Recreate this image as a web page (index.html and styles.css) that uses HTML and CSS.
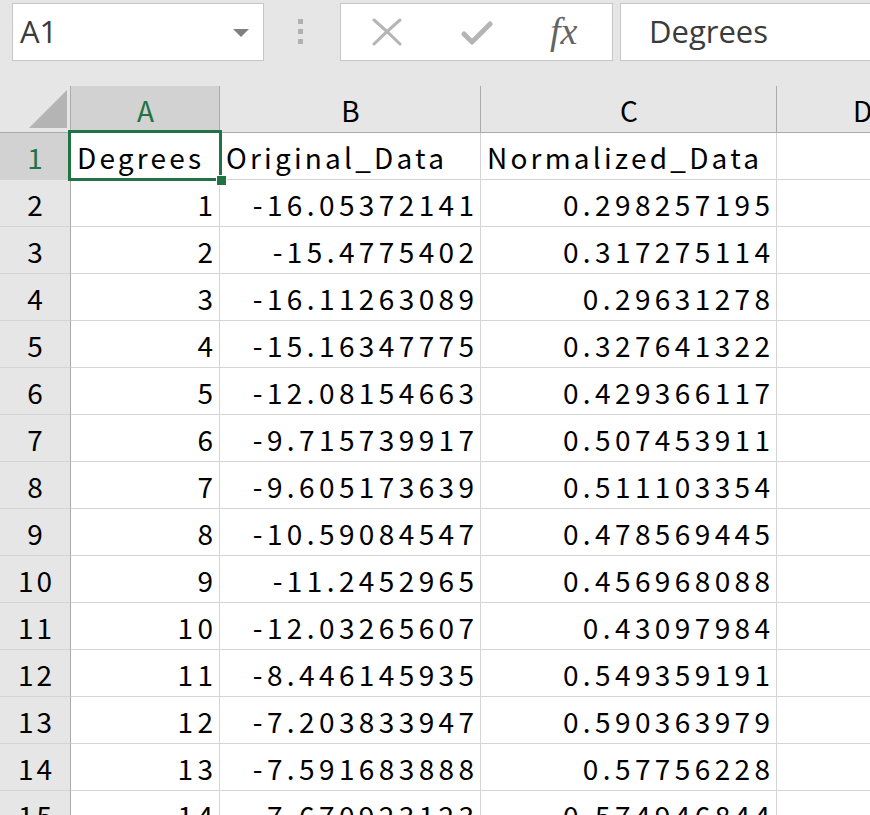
FILE: index.html
```html
<!DOCTYPE html>
<html>
<head>
<meta charset="utf-8">
<link rel="stylesheet" href="styles.css">
</head>
<body>
<div class="topbar">
  <div class="namebox"><span class="nb-text">A1</span><span class="nb-arrow"></span></div>
  <div class="grip"><i></i><i></i><i></i></div>
  <div class="fbtns">
    <svg class="ic-x" width="30" height="28" viewBox="0 0 30 28"><path d="M2 2 Q15 13 28 26 M28 2 Q14 14 2 26" stroke="#b5b5b5" stroke-width="3" stroke-linecap="round" fill="none"/></svg>
    <svg class="ic-check" width="32" height="26" viewBox="0 0 32 26"><path d="M3 14 L11 22 L29 4" stroke="#b5b5b5" stroke-width="5" stroke-linecap="round" stroke-linejoin="round" fill="none"/></svg>
    <span class="fx">fx</span>
  </div>
  <div class="finput">Degrees</div>
</div>
<div class="sheet">
  <div class="grid">
    <div class="corner"><span class="tri"></span></div>
    <div class="ch sel">A</div>
    <div class="ch">B</div>
    <div class="ch">C</div>
    <div class="ch last">D</div>

    <div class="rh sel">1</div>
    <div class="c t">Degrees</div>
    <div class="c t">Original_Data</div>
    <div class="c t">Normalized_Data</div>
    <div class="c e"></div>

    <div class="rh">2</div><div class="c">1</div><div class="c">-16.05372141</div><div class="c">0.298257195</div><div class="c e"></div>
    <div class="rh">3</div><div class="c">2</div><div class="c">-15.4775402</div><div class="c">0.317275114</div><div class="c e"></div>
    <div class="rh">4</div><div class="c">3</div><div class="c">-16.11263089</div><div class="c">0.29631278</div><div class="c e"></div>
    <div class="rh">5</div><div class="c">4</div><div class="c">-15.16347775</div><div class="c">0.327641322</div><div class="c e"></div>
    <div class="rh">6</div><div class="c">5</div><div class="c">-12.08154663</div><div class="c">0.429366117</div><div class="c e"></div>
    <div class="rh">7</div><div class="c">6</div><div class="c">-9.715739917</div><div class="c">0.507453911</div><div class="c e"></div>
    <div class="rh">8</div><div class="c">7</div><div class="c">-9.605173639</div><div class="c">0.511103354</div><div class="c e"></div>
    <div class="rh">9</div><div class="c">8</div><div class="c">-10.59084547</div><div class="c">0.478569445</div><div class="c e"></div>
    <div class="rh">10</div><div class="c">9</div><div class="c">-11.2452965</div><div class="c">0.456968088</div><div class="c e"></div>
    <div class="rh">11</div><div class="c">10</div><div class="c">-12.03265607</div><div class="c">0.43097984</div><div class="c e"></div>
    <div class="rh">12</div><div class="c">11</div><div class="c">-8.446145935</div><div class="c">0.549359191</div><div class="c e"></div>
    <div class="rh">13</div><div class="c">12</div><div class="c">-7.203833947</div><div class="c">0.590363979</div><div class="c e"></div>
    <div class="rh">14</div><div class="c">13</div><div class="c">-7.591683888</div><div class="c">0.57756228</div><div class="c e"></div>
    <div class="rh">15</div><div class="c">14</div><div class="c">-7.670923123</div><div class="c">0.574946844</div><div class="c e"></div>
  </div>
  <div class="selbox"><span class="handle"></span></div>
</div>
</body>
</html>
```

FILE: styles.css
```css
html, body {
  margin: 0;
  padding: 0;
  overflow: hidden;
  background: #ffffff;
}
body {
  width: 870px;
  height: 815px;
  font-family: "Noto Sans CJK SC", "Noto Sans", sans-serif;
}
.topbar {
  height: 86px;
  background: #e6e6e6;
  display: flex;
  align-items: flex-start;
  padding-top: 3px;
  box-sizing: border-box;
}
.namebox {
  margin-left: 12px;
  width: 252px;
  height: 58px;
  box-sizing: border-box;
  border: 1px solid #c6c6c6;
  background: #fff;
  display: flex;
  align-items: center;
  justify-content: space-between;
  padding: 0 14px 0 7px;
}
.nb-text {
  font-family: "Open Sans", "Liberation Sans", sans-serif;
  font-size: 31px;
  color: #3b3b3b;
  line-height: 1;
  margin-top: -1px;
}
.nb-arrow {
  width: 0;
  height: 0;
  border-left: 8px solid transparent;
  border-right: 8px solid transparent;
  border-top: 8px solid #808080;
  margin-top: 2px;
}
.grip {
  margin-left: 34px;
  width: 5px;
  display: flex;
  flex-direction: column;
  gap: 5px;
  padding-top: 16px;
}
.grip i {
  display: block;
  width: 5px;
  height: 5px;
  background: #b1b1b1;
}
.fbtns {
  margin-left: 37px;
  width: 273px;
  height: 58px;
  box-sizing: border-box;
  border: 1px solid #c6c6c6;
  background: #fff;
  display: flex;
  align-items: center;
}
.ic-x {
  margin-left: 31px;
}
.ic-check {
  margin-left: 59px;
  margin-top: 2px;
}
.fx {
  margin-left: 57px;
  font-family: "Liberation Serif", "DejaVu Serif", serif;
  font-style: italic;
  font-size: 38px;
  color: #636363;
  line-height: 1;
  margin-top: -2px;
}
.finput {
  margin-left: 7px;
  flex: 1;
  height: 58px;
  box-sizing: border-box;
  border: 1px solid #c6c6c6;
  border-right: none;
  background: #fff;
  font-family: "Open Sans", "Liberation Sans", sans-serif;
  font-size: 31px;
  color: #3b3b3b;
  padding-left: 28px;
  line-height: 54px;
}
.sheet {
  position: relative;
}
.grid {
  display: grid;
  grid-template-columns: 71px 149px 261px 296px 1fr;
  grid-auto-rows: 47px;
  font-size: 28px;
  color: #000;
  letter-spacing: 3.5px;
}
.corner {
  background: #e6e6e6;
  border-right: 1px solid #ababab;
  border-bottom: 1px solid #ababab;
  box-sizing: border-box;
  position: relative;
}
.tri {
  position: absolute;
  right: 3px;
  bottom: 4px;
  width: 0;
  height: 0;
  border-left: 38px solid transparent;
  border-bottom: 38px solid #b4b4b4;
}
.ch {
  background: #e6e6e6;
  border-right: 1px solid #ababab;
  border-bottom: 1px solid #ababab;
  box-sizing: border-box;
  display: flex;
  align-items: center;
  justify-content: center;
  padding: 2px 0 0 3px;
  letter-spacing: 2px;
}
.ch.last {
  justify-content: flex-start;
  padding-left: 76px;
  border-right: none;
}
.ch.sel, .rh.sel {
  background: #d2d2d2;
  color: #217346;
}
.rh {
  background: #e6e6e6;
  border-right: 1px solid #ababab;
  border-bottom: 1px solid #d4d4d4;
  box-sizing: border-box;
  display: flex;
  align-items: center;
  justify-content: center;
  padding: 2px 0 0 3px;
  letter-spacing: 3px;
}
.c {
  border-right: 1px solid #d4d4d4;
  border-bottom: 1px solid #d4d4d4;
  box-sizing: border-box;
  display: flex;
  align-items: center;
  justify-content: flex-end;
  padding: 2px 1.5px 0 0;
  white-space: nowrap;
  letter-spacing: 4.4px;
}
.c.t {
  justify-content: flex-start;
  padding-left: 6px;
  letter-spacing: 3.2px;
}
.c.e {
  border-right: none;
}
.selbox {
  position: absolute;
  left: 68px;
  top: 44px;
  width: 154px;
  height: 51px;
  box-sizing: border-box;
  border: 3px solid #217346;
  pointer-events: none;
}
.handle {
  position: absolute;
  right: -8px;
  bottom: -8px;
  width: 9px;
  height: 9px;
  background: #217346;
  border: 1px solid #fff;
}
```
